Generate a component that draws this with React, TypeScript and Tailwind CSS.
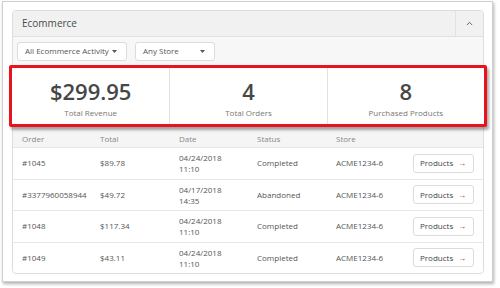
import React from 'react';
import { ChevronUp } from 'lucide-react';

interface Order {
  id: string;
  total: string;
  date: string;
  time: string;
  status: string;
  store: string;
}

const orders: Order[] = [
  { id: '#1045', total: '$89.78', date: '04/24/2018', time: '11:10', status: 'Completed', store: 'ACME1234-6' },
  { id: '#3377960058944', total: '$49.72', date: '04/17/2018', time: '14:35', status: 'Abandoned', store: 'ACME1234-6' },
  { id: '#1048', total: '$117.34', date: '04/24/2018', time: '11:10', status: 'Completed', store: 'ACME1234-6' },
  { id: '#1049', total: '$43.11', date: '04/24/2018', time: '11:10', status: 'Completed', store: 'ACME1234-6' },
];

const stats = [
  { value: '$299.95', label: 'Total Revenue' },
  { value: '4', label: 'Total Orders' },
  { value: '8', label: 'Purchased Products' },
];

const cols = 'grid grid-cols-[78px_79px_78px_79px_77px_1fr] pl-[9px]';

const Caret = () => (
  <svg width="5" height="3" viewBox="0 0 5 3" className="text-[#555]">
    <path d="M0 0h5L2.5 3z" fill="currentColor" />
  </svg>
);

const Dropdown: React.FC<{ label: string; width: string }> = ({ label, width }) => (
  <div
    className={`${width} h-[19px] flex items-center justify-between pl-[7px] pr-[9px] bg-white border border-[#dcdcdc] rounded-[3px] text-[8px] text-[#555]`}
  >
    <span>{label}</span>
    <Caret />
  </div>
);

const App: React.FC = () => {
  return (
    <div className="w-[500px] h-[288px] bg-white pl-[2px] pt-[1px] font-['Open_Sans',sans-serif]">
      <div className="w-[491px] h-[281px] bg-white border border-[#cfcfcf] shadow-[1px_2px_3px_rgba(0,0,0,0.3)] pl-[9px] pt-[8px]">
        <div className="w-[472px] h-[264px] border border-[#dddddd] rounded-[4px] flex flex-col">
          {/* Header */}
          <div className="h-[26px] flex items-stretch bg-[#f1f1f1] border-b border-[#e2e2e2] rounded-t-[4px]">
            <div className="flex-1 flex items-center pl-[9px] text-[10px] text-[#4a4a4a]">Ecommerce</div>
            <div className="w-[28px] flex items-center justify-center border-l border-[#e2e2e2] text-[#555]">
              <ChevronUp size={9} strokeWidth={2.5} />
            </div>
          </div>

          {/* Filters */}
          <div className="h-[28px] flex items-center gap-[8px] pl-[4px] bg-[#f7f7f7]">
            <Dropdown label="All Ecommerce Activity" width="w-[110px]" />
            <Dropdown label="Any Store" width="w-[80px]" />
          </div>

          {/* Stats */}
          <div className="-mx-[4px] h-[62px] grid grid-cols-3 bg-white border-[3px] border-[#e8141b] rounded-[2px] shadow-[2px_3px_3px_rgba(0,0,0,0.35)] relative z-10">
            {stats.map((s, i) => (
              <div
                key={s.label}
                className={`flex flex-col items-center justify-center pt-[3px] ${i > 0 ? 'border-l border-[#e2e2e2]' : ''}`}
              >
                <div className="text-[22px] leading-[26px] font-semibold text-[#474747]">{s.value}</div>
                <div className="text-[8px] leading-[11px] text-[#777] mt-[3px]">{s.label}</div>
              </div>
            ))}
          </div>

          {/* Table header */}
          <div className={`${cols} h-[20px] items-center pt-[3px] bg-[#f5f5f5] text-[8px] text-[#888]`}>
            <span>Order</span>
            <span>Total</span>
            <span>Date</span>
            <span>Status</span>
            <span>Store</span>
            <span />
          </div>

          {/* Rows */}
          {orders.map((o, i) => (
            <div
              key={o.id}
              className={`${cols} h-[31.5px] items-center border-t border-[#e6e6e6] text-[8px] text-[#555] bg-white ${
                i === orders.length - 1 ? 'rounded-b-[4px]' : ''
              }`}
            >
              <span>{o.id}</span>
              <span>{o.total}</span>
              <span className="leading-[11px]">
                {o.date}
                <br />
                {o.time}
              </span>
              <span>{o.status}</span>
              <span>{o.store}</span>
              <div className="w-[61px] h-[19px] flex items-center justify-between pl-[6px] pr-[7px] border border-[#dcdcdc] rounded-[3px] text-[#444]">
                <span>Products</span>
                <span className="text-[8px] leading-none">→</span>
              </div>
            </div>
          ))}
        </div>
      </div>
    </div>
  );
};

export default App;
